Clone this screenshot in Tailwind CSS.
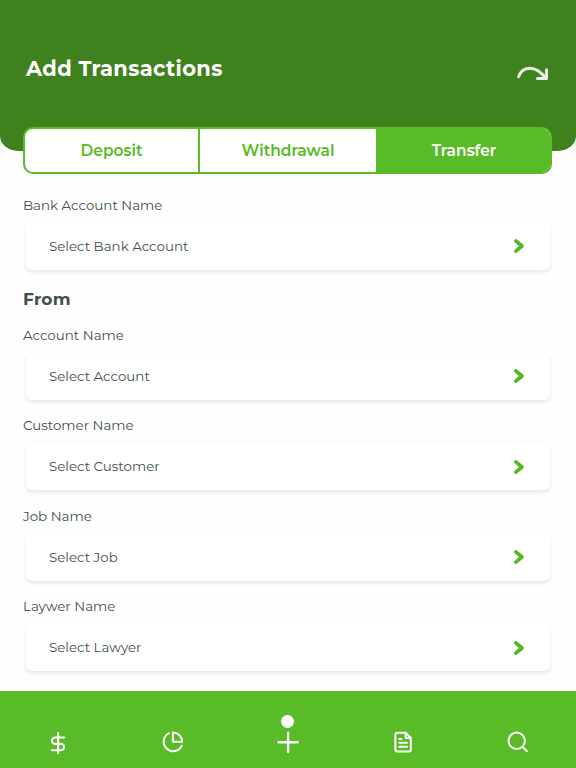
<!DOCTYPE html>
<html lang="en">
  <head>
    <meta charset="UTF-8" />
    <meta name="viewport" content="width=device-width, initial-scale=1.0" />
    <title>Add Transactions</title>
    <script src="https://cdn.jsdelivr.net/npm/@tailwindcss/browser@4"></script>
  </head>
  <body
    class="flex h-screen flex-col overflow-hidden bg-[#fefefe] font-['Montserrat','Inter',sans-serif] text-[#3f5049]"
  >
    <header
      class="flex h-[151px] shrink-0 items-start justify-between rounded-b-[18px_15px] bg-[#3f811d] pr-[27px] pl-[26px] text-white"
    >
      <h1 class="mt-[54px] text-[21px] leading-[30px] font-bold tracking-[0.35px]">
        Add Transactions
      </h1>
      <svg
        class="mt-[65px] h-4 w-8"
        viewBox="0 0 32 16"
        fill="none"
        stroke="#e9f1e5"
        stroke-width="3"
        stroke-linecap="round"
        stroke-linejoin="round"
      >
        <path d="M1.5 11.7C3.5 6.5 7.5 3.3 13 3.3C19.5 3.3 24.3 7.5 28.5 13" />
        <path d="M29.5 4.8V13.4H20.5" />
      </svg>
    </header>

    <div
      class="mr-6 ml-[23px] -mt-6 flex h-[47px] shrink-0 overflow-hidden rounded-[10px] border-2 border-[#58bb27] bg-white text-[15.5px] font-semibold text-[#58bb27]"
    >
      <button class="w-[175px] border-r-2 border-[#58bb27] pt-px">Deposit</button>
      <button class="w-[176px] pt-px">Withdrawal</button>
      <button class="flex-1 bg-[#58bb27] pt-px pl-0.5 text-white">Transfer</button>
    </div>

    <main class="flex-1 px-[23px] pt-[21.5px] text-[13.4px]">
      <section class="mb-4">
        <label class="block h-5 leading-[19px]">Bank Account Name</label>
        <div
          class="mt-[7px] mr-[3px] ml-[3px] flex h-[47px] items-center justify-between rounded-md bg-white pr-[25px] pl-[23px] shadow-[0_2px_4px_rgba(0,0,0,0.1)]"
        >
          <span>Select Bank Account</span>
          <svg class="h-4 w-3" viewBox="0 0 12 16" fill="none" stroke="#52b81f" stroke-width="3.6" stroke-linecap="round" stroke-linejoin="round">
            <path d="M2.8 2.8L9 8L2.8 13.2" />
          </svg>
        </div>
      </section>

      <h2 class="mb-[10px] h-[30px] text-[17px] leading-[26px] font-bold tracking-[0.25px]">
        From
      </h2>

      <section class="mb-[16.5px]">
        <label class="block h-5 leading-[19px]">Account Name</label>
        <div
          class="mt-[7px] mr-[3px] ml-[3px] flex h-[47px] items-center justify-between rounded-md bg-white pr-[25px] pl-[23px] shadow-[0_2px_4px_rgba(0,0,0,0.1)]"
        >
          <span>Select Account</span>
          <svg class="h-4 w-3" viewBox="0 0 12 16" fill="none" stroke="#52b81f" stroke-width="3.6" stroke-linecap="round" stroke-linejoin="round">
            <path d="M2.8 2.8L9 8L2.8 13.2" />
          </svg>
        </div>
      </section>

      <section class="mb-[16.5px]">
        <label class="block h-5 leading-[19px]">Customer Name</label>
        <div
          class="mt-[7px] mr-[3px] ml-[3px] flex h-[47px] items-center justify-between rounded-md bg-white pr-[25px] pl-[23px] shadow-[0_2px_4px_rgba(0,0,0,0.1)]"
        >
          <span>Select Customer</span>
          <svg class="h-4 w-3" viewBox="0 0 12 16" fill="none" stroke="#52b81f" stroke-width="3.6" stroke-linecap="round" stroke-linejoin="round">
            <path d="M2.8 2.8L9 8L2.8 13.2" />
          </svg>
        </div>
      </section>

      <section class="mb-[16.5px]">
        <label class="block h-5 leading-[19px]">Job Name</label>
        <div
          class="mt-[7px] mr-[3px] ml-[3px] flex h-[47px] items-center justify-between rounded-md bg-white pr-[25px] pl-[23px] shadow-[0_2px_4px_rgba(0,0,0,0.1)]"
        >
          <span>Select Job</span>
          <svg class="h-4 w-3" viewBox="0 0 12 16" fill="none" stroke="#52b81f" stroke-width="3.6" stroke-linecap="round" stroke-linejoin="round">
            <path d="M2.8 2.8L9 8L2.8 13.2" />
          </svg>
        </div>
      </section>

      <section>
        <label class="block h-5 leading-[19px]">Laywer Name</label>
        <div
          class="mt-[7px] mr-[3px] ml-[3px] flex h-[47px] items-center justify-between rounded-md bg-white pr-[25px] pl-[23px] shadow-[0_2px_4px_rgba(0,0,0,0.1)]"
        >
          <span>Select Lawyer</span>
          <svg class="h-4 w-3" viewBox="0 0 12 16" fill="none" stroke="#52b81f" stroke-width="3.6" stroke-linecap="round" stroke-linejoin="round">
            <path d="M2.8 2.8L9 8L2.8 13.2" />
          </svg>
        </div>
      </section>
    </main>

    <nav
      class="grid h-[77px] shrink-0 grid-cols-5 items-end justify-items-center bg-[#58bb27] pb-[14px] text-white"
    >
      <svg class="size-6" viewBox="0 0 24 24" fill="none" stroke="currentColor" stroke-width="2.1" stroke-linecap="round" stroke-linejoin="round">
        <path d="M12.1 3V24M18 7.5H9.1a3.2 3.2 0 0 0 0 6.4h5.8a3.2 3.2 0 0 1 0 6.4H5.8" />
      </svg>
      <svg class="size-6" viewBox="0 0 24 24" fill="none" stroke="currentColor" stroke-width="2" stroke-linecap="round" stroke-linejoin="round">
        <path d="M20.8 15.8A9.5 9.5 0 1 1 8 3.2" />
        <path d="M21.2 11.8A9.3 9.3 0 0 0 11.9 2.5v9.3z" />
      </svg>
      <div class="flex flex-col items-center">
        <span class="mb-0.5 size-[13px] rounded-full bg-white"></span>
        <svg class="size-6" viewBox="0 0 24 24" fill="none" stroke="currentColor" stroke-width="2.4" stroke-linecap="round">
          <path d="M12.1 2.7V21.7M2.5 12.3H21.7" />
        </svg>
      </div>
      <svg class="size-6" viewBox="0 0 24 24" fill="none" stroke="currentColor" stroke-width="2" stroke-linecap="round" stroke-linejoin="round">
        <path d="M14.6 2.7H6.3a1.9 1.9 0 0 0-1.9 1.9v15a1.9 1.9 0 0 0 1.9 1.9h11.6a1.9 1.9 0 0 0 1.9-1.9V8z" />
        <path d="M14.6 2.7V8h5.2M8.2 8.9h2.2M8.2 12.8h7.8M8.2 16.8h7.8" />
      </svg>
      <svg class="size-6" viewBox="0 0 24 24" fill="none" stroke="currentColor" stroke-width="2" stroke-linecap="round">
        <circle cx="10.7" cy="10.8" r="8.2" />
        <path d="M16.7 16.9L21 21.2" />
      </svg>
    </nav>
  </body>
</html>
